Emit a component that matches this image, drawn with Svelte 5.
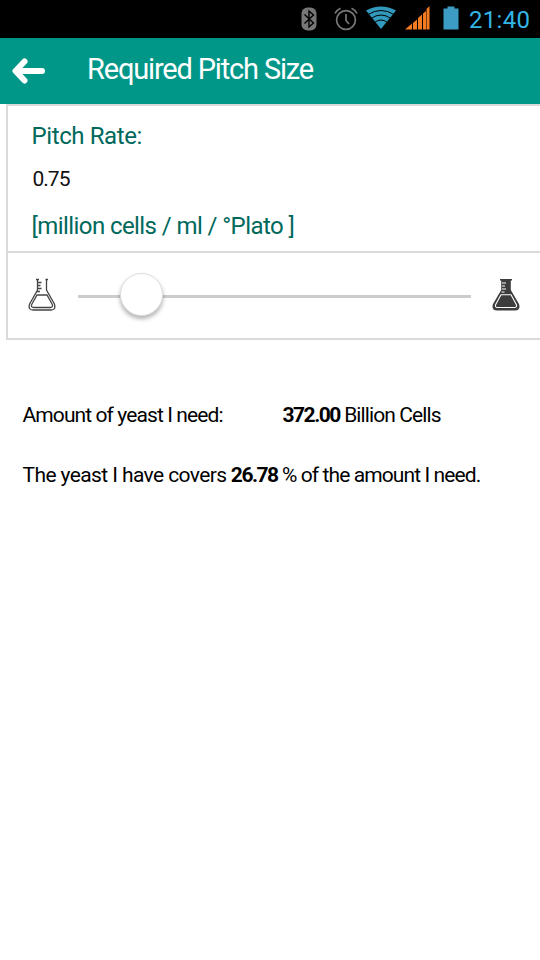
<script>
  let pitchRate = $state(0.75);

  // million cells per unit of pitch rate for the current batch
  const batchFactor = 496;
  const yeastAvailable = 99.62;

  let yeastNeeded = $derived(pitchRate * batchFactor);
  let coverage = $derived((yeastAvailable / yeastNeeded) * 100);
</script>

<div class="screen">
  <div class="status-bar">
    <svg class="bluetooth" width="16" height="24" viewBox="0 0 16 24">
      <rect x="0.5" y="0.5" width="15" height="23" rx="6" fill="#777" />
      <path d="M3.5 7.5l9 8.5L8 20V4l4.5 4-9 8.5" fill="none" stroke="#000" stroke-width="1.4" />
    </svg>
    <svg class="alarm" width="24" height="24" viewBox="0 0 24 24" fill="none" stroke="#777" stroke-width="1.7">
      <circle cx="12" cy="13" r="9.4" />
      <path d="M12 7v6.5l3 3.5M1 6.5Q2.5 3 6.5 1.2M23 6.5Q21.500 3 17.500 1.200" />
    </svg>
    <svg class="wifi" width="32" height="24" viewBox="0 0 32 24">
      <path d="M1 4.500Q16-3.500 31 4.500L16 23Z" fill="#3299bd" />
      <path d="M3 8.500Q16 0.500 29 8.500M6 12.500Q16 5.500 26 12.500M9.500 16.500Q16 11.500 22.500 16.500" fill="none" stroke="#000" stroke-width="1" />
    </svg>
    <svg class="signal" width="25" height="24" viewBox="0 0 25 24" fill="#f47b20">
      <path d="M0 23.500L7 17.500v6zM8 17L12 13.500v10H8zM13 12L17 8.500v15h-4zM18 7.500l3-2.500v18.500H18zM21.500 3L24.500 0v23.500h-3z" />
    </svg>
    <svg class="battery" width="16" height="24" viewBox="0 0 16 24">
      <path d="M4.500 0.500h7v2h4v21H0.500V2.500h4z" fill="#3c9cc4" />
    </svg>
    <span class="clock">21:40</span>
  </div>

  <header class="toolbar">
    <button class="back-btn" aria-label="Back">
      <svg width="34" height="28" viewBox="0 0 34 28" fill="none" stroke="#fff" stroke-width="6" stroke-linecap="round" stroke-linejoin="round">
        <path d="M12.500 4.500L3.500 14l9 9.500M5 14h25" />
      </svg>
    </button>
    <h1>Required Pitch Size</h1>
  </header>

  <section class="card">
    <div class="rate">
      <div class="label">Pitch Rate:</div>
      <div class="value">{pitchRate.toFixed(2)}</div>
      <div class="label unit">[million cells / ml / °Plato ]</div>
    </div>
    <div class="slider-row">
      <svg width="28" height="34" viewBox="0 0 28 34" fill="none" stroke="#444" stroke-width="1.3">
        <path d="M9.500 1.500v10.500L1.600 26Q-0.200 32 5 32h18Q28.200 32 26.400 26L18.500 12V1.500" />
        <path d="M8 1.500h3M17.500 1.500H20M9.500 4.500h4M9.500 7.500h3M9.500 10.500h4M9 13.500h3M9 17h10l5.300 9.500q1 3-2 3H5.700q-3 0-2-3z" />
      </svg>
      <input type="range" min="0.5" max="2.6" step="0.01" bind:value={pitchRate} aria-label="Pitch rate" />
      <svg width="28" height="34" viewBox="0 0 28 34">
        <path d="M8 1h12v1.500h-1.200V12L27 26Q29 32.500 23 32.500H5Q-1 32.500 1 26L9.200 12V2.500H8z" fill="#3d3d3d" />
        <path d="M10 5h4M10 8h3M10 11h4M9.500 14h3" stroke="#fff" stroke-width="1.1" />
        <path d="M9 16.800h10l5.300 9.700q1 3-2 3H5.700q-3 0-2-3z" fill="none" stroke="#fff" stroke-width="1.1" />
      </svg>
    </div>
  </section>

  <div class="results">
    <div class="result">
      <span class="caption">Amount of yeast I need:</span>
      <span class="amount"><b>{yeastNeeded.toFixed(2)}</b> Billion Cells</span>
    </div>
    <div class="result covers">
      <span class="lead">The yeast I have covers</span> <b>{coverage.toFixed(2)}</b> % of the amount I need.
    </div>
  </div>
</div>

<style>
  :global(body) { margin: 0; background: #fff; }

  .screen {
    min-height: 960px;
    overflow: hidden;
    background: #fff;
    color: #111;
    font-family: Roboto, "Liberation Sans", sans-serif;
  }

  .status-bar {
    display: flex;
    align-items: center;
    justify-content: flex-end;
    height: 38px;
    padding-right: 9px;
    box-sizing: border-box;
    background: #000;
  }
  .status-bar svg { flex: none; }
  .bluetooth { margin-right: 17px; }
  .alarm { margin-right: 7px; }
  .wifi { margin-top: -3px; margin-right: 8px; }
  .signal { margin-top: -3px; margin-right: 13px; }
  .battery { margin-top: -2px; margin-right: 10px; }
  .clock { width: 62px; padding-top: 1px; color: #33b5e5; font-size: 24px; letter-spacing: 0.3px; line-height: 38px; white-space: nowrap; }

  .toolbar { display: flex; align-items: center; height: 66px; background: #009688; }
  .back-btn { display: flex; width: 87px; padding: 0 0 0 12px; border: 0; background: none; }
  h1 { margin: 0; color: #fff; font-size: 29px; font-weight: 400; letter-spacing: -1.17px; line-height: 64px; padding-bottom: 4px; white-space: nowrap; }

  .card { margin-left: 6px; border: 2px solid #dadada; border-right: 0; }
  .rate { height: 147px; padding-left: 23.5px; box-sizing: border-box; border-bottom: 2px solid #dadada; white-space: nowrap; }
  .label { color: #00695c; font-size: 24px; line-height: 30px; padding-top: 15px; letter-spacing: -0.4px; }
  .value { padding: 14px 0 0 1px; font-size: 21px; line-height: 28px; letter-spacing: -1px; }
  .unit { padding-top: 18px; letter-spacing: -0.58px; }

  .slider-row { display: flex; align-items: center; height: 85px; padding: 2px 20px 0; box-sizing: border-box; }
  .slider-row svg { flex: none; margin-top: -3px; }

  input[type='range'] {
    flex: 1;
    min-width: 0;
    height: 44px;
    margin: 0 21px 0 22px;
    background: none;
    appearance: none;
    -webkit-appearance: none;
  }
  input::-webkit-slider-runnable-track { height: 3px; background: #ccc; }
  input::-webkit-slider-thumb {
    -webkit-appearance: none;
    width: 43px;
    height: 43px;
    margin-top: -22px;
    border: 1px solid #ddd;
    border-radius: 50%;
    box-sizing: border-box;
    background: #fff;
    box-shadow: 0 3px 4px rgba(0, 0, 0, 0.3);
  }

  .results { padding: 60px 0 0 22.5px; font-size: 21px; color: #000; white-space: nowrap; }
  .result { display: flex; height: 60px; line-height: 30px; letter-spacing: -0.9px; }
  .result b { letter-spacing: -1.5px; }
  .covers { display: block; }
  .lead { letter-spacing: -0.6px; }
  .caption { width: 260px; }
</style>
